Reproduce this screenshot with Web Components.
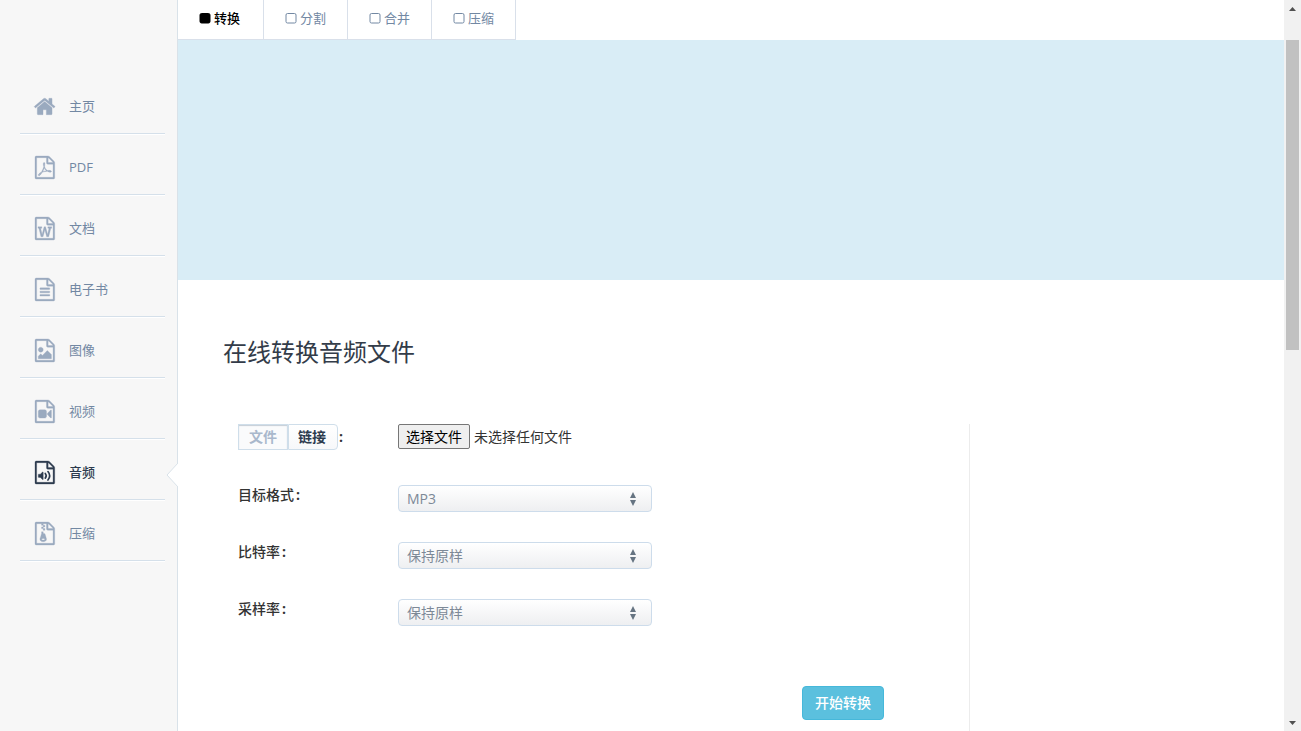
<!DOCTYPE html>
<html lang="zh-CN">
<head>
<meta charset="utf-8">
<title>在线转换音频文件</title>
<style>
  body { margin: 0; background: #fff; color: #333; font: 14px/20px "Open Sans", "Noto Sans CJK SC", sans-serif; }
</style>
</head>
<body>
<app-shell>
  <side-nav slot="nav">
    <nav-item icon="home">主页</nav-item>
    <nav-item icon="pdf">PDF</nav-item>
    <nav-item icon="word">文档</nav-item>
    <nav-item icon="text">电子书</nav-item>
    <nav-item icon="image">图像</nav-item>
    <nav-item icon="video">视频</nav-item>
    <nav-item icon="audio" active>音频</nav-item>
    <nav-item icon="zip">压缩</nav-item>
  </side-nav>
  <tab-bar>
    <tab-link active>转换</tab-link>
    <tab-link>分割</tab-link>
    <tab-link>合并</tab-link>
    <tab-link>压缩</tab-link>
  </tab-bar>
  <ad-banner></ad-banner>
  <convert-form heading="在线转换音频文件"></convert-form>
  <scroll-rail slot="rail"></scroll-rail>
</app-shell>

<script>
const define = (name, html, setup) => {
  const template = document.createElement('template');
  template.innerHTML = html;
  customElements.define(name, class extends HTMLElement {
    constructor() {
      super();
      this.attachShadow({ mode: 'open' }).append(template.content.cloneNode(true));
    }
    connectedCallback() { if (setup) setup(this, this.shadowRoot); }
  });
};

const page = '<path d="M1468 380q28 28 48 76t20 88v1152q0 40-28 68t-68 28h-1344q-40 0-68-28t-28-68v-1600q0-40 28-68t68-28h896q40 0 88 20t76 48zm-444-244v376h376q-10-29-22-41l-313-313q-12-12-41-22zm384 1528v-1024h-416q-40 0-68-28t-28-68v-416h-768v1536h1280z"/>';
const glyphs = {
  home: '<path d="M1408 992v480q0 26-19 45t-45 19h-384v-384h-256v384h-384q-26 0-45-19t-19-45v-480q0-1 .5-3t.5-3l575-474 575 474q1 2 1 6zm223-69l-62 74q-8 9-21 11h-3q-13 0-21-7l-692-577-692 577q-12 8-24 7-13-2-21-11l-62-74q-8-10-7-23.5t11-21.5l719-599q32-26 76-26t76 26l244 204v-195q0-14 9-23t23-9h192q14 0 23 9t9 23v408l219 182q10 8 11 21.5t-7 23.5z"/>',
  pdf: page + '<path d="M894 1071q33 26 84 56 59-7 117-7 147 0 177 49 16 22 2 52 0 1-1 2l-2 2v1q-6 38-71 38-48 0-115-20t-130-53q-221 24-392 83-153 262-242 262-15 0-28-7l-24-12q-1-1-6-5-10-10-6-36 9-40 56-91.500t132-96.500q14-9 23 6 2 2 2 4 52-85 107-197 68-136 104-262-24-82-30.500-159.500t6.500-127.500q11-40 42-40h22q23 0 35 15 18 21 9 68-2 6-4 8 1 3 1 8v30q-2 123-14 192 55 164 146 238zm-576 411q52-24 137-158-51 40-87.500 84t-49.500 74zm398-920q-15 42-2 132 1-7 7-44 0-3 7-43 1-4 4-8-1-1-1-2-1-2-1-3-1-22-13-36 0 1-1 2v2zm-124 661q135-54 284-81-2-1-13-9.500t-16-13.500q-76-67-127-176-27 86-83 197-30 56-45 83zm646-16q-24-24-140-24 76 28 124 28 14 0 18-1 0-1-2-3z"/>',
  word: page + '<path d="M233 768v107h70l164 661h159l128-485q7-20 10-46 2-16 2-24h4l3 24q1 3 3.500 20t5.500 26l128 485h159l164-661h70v-107h-300v107h90l-99 438q-5 20-7 46l-2 21h-4l-3-21q-1-5-4-21t-5-25l-144-545h-114l-144 545q-2 9-4.500 24.500t-3.500 21.500l-4 21h-4l-2-21q-2-26-7-46l-99-438h90v-107h-300z"/>',
  text: page + '<path d="M416 768h704q32 0 32 32v64q0 32-32 32h-704q-32 0-32-32v-64q0-32 32-32zm0 256h704q32 0 32 32v64q0 32-32 32h-704q-32 0-32-32v-64q0-32 32-32zm0 256h704q32 0 32 32v64q0 32-32 32h-704q-32 0-32-32v-64q0-32 32-32z"/>',
  image: page + '<path d="M1280 1216v320h-1024v-192l192-192 128 128 384-384zm-832-192q-80 0-136-56t-56-136 56-136 136-56 136 56 56 136-56 136-136 56z"/>',
  video: page + '<path d="M768 768q52 0 90 38t38 90v384q0 52-38 90t-90 38h-384q-52 0-90-38t-38-90v-384q0-52 38-90t90-38h384zm492 2q20 8 20 30v576q0 22-20 30-8 2-12 2-14 0-23-9l-265-266v-90l265-266q9-9 23-9 4 0 12 2z"/>',
  audio: page + '<path d="M620 850q20 8 20 30v544q0 22-20 30-8 2-12 2-12 0-23-9l-166-167h-131q-32 0-32-32v-192q0-32 32-32h131l166-167q16-15 35-7z"/><path class="wave" d="M800 970q150 182 0 364M1010 820q270 332 0 664"/>',
  zip: page + '<path d="M640 128h-128v128h128zm128 128h-128v128h128zm-128 128h-128v128h128zm128 128h-128v128h128z"/><path fill-rule="evenodd" d="M781 943l107 349q8 27 8 52 0 83-72.500 137.500t-183.500 54.500-183.500-54.500-72.500-137.500q0-25 8-52 21-63 120-396v-128h128v128h79q22 0 39 13t23 34zm-141 465q53 0 90.500-19t37.500-45-37.500-45-90.500-19-90.500 19-37.500 45 37.500 45 90.500 19z"/>'
};

define('app-shell', `
  <style>
    :host { display: grid; grid-template-columns: 178px minmax(0, 1fr) 17px; min-height: 100vh; }
    main { display: flex; flex-direction: column; }
  </style>
  <slot name="nav"></slot><main><slot></slot></main><slot name="rail"></slot>`);

define('side-nav', `
  <style>
    :host { display: block; box-sizing: border-box; padding: 73px 12px 0 20px; background: #f7f7f7; border-right: 1px solid #d9e2e9; }
  </style>
  <nav aria-label="工具"><slot></slot></nav>`);

define('nav-item', `
  <style>
    :host { display: block; position: relative; color: #7288a3; }
    a { display: flex; align-items: center; gap: 13px; height: 54px; padding: 6px 0 0 14px; border-bottom: 1px solid #d5e0ea; box-shadow: 0 1px #fff; color: inherit; text-decoration: none; font-size: 13px; line-height: 20px; }
    .icon { display: flex; justify-content: center; width: 22px; color: #9aaabf; }
    .icon svg { height: 23px; fill: currentColor; stroke: currentColor; stroke-width: 24px; overflow: visible; }
    .icon .wave { fill: none; stroke-width: 130px; stroke-linecap: round; }
    .notch { display: none; position: absolute; right: -13px; top: 24px; }
    :host([active]) { color: #2d3b4e; }
    :host([active]) a { font-weight: 500; }
    :host([active]) .icon { color: inherit; }
    :host([active]) .notch { display: block; }
  </style>
  <a href="#"><span class="icon"></span><span><slot></slot></span></a>
  <svg class="notch" width="12" height="24" viewBox="0 0 12 24" aria-hidden="true"><path d="M12 0L1 12L12 24" fill="#fff" stroke="#d9e2e9"/></svg>`,
  (el, root) => {
    const name = el.getAttribute('icon');
    root.querySelector('.icon').innerHTML = `<svg aria-hidden="true" viewBox="0 0 ${name === 'home' ? 1664 : 1536} 1792">${glyphs[name]}</svg>`;
    if (el.hasAttribute('active')) root.querySelector('a').setAttribute('aria-current', 'page');
  });

define('tab-bar', `
  <style>
    :host { display: block; }
    nav { display: flex; }
  </style>
  <nav aria-label="音频工具"><slot></slot></nav>`);

define('tab-link', `
  <style>
    :host { display: block; color: #7288a3; }
    a { display: flex; align-items: center; gap: 3px; height: 35px; padding: 0 21px 4px; border: solid #d9e0ea; border-width: 0 1px 1px 0; color: inherit; font-size: 13px; text-decoration: none; }
    svg { fill: none; stroke: currentColor; }
    :host([active]) { color: #000; }
    :host([active]) a { font-weight: 500; padding-right: 23px; }
    :host([active]) svg { fill: currentColor; }
  </style>
  <a href="#"><svg width="12" height="12" viewBox="0 0 12 12" aria-hidden="true"><rect x="1" y="1.500" width="10" height="9.500" rx="1.500"/></svg><span><slot></slot></span></a>`);

define('ad-banner', `<style>:host { display: block; height: 240px; background: #d9edf6; }</style>`);

define('toggle-pair', `
  <style>
    :host { display: inline-flex; }
    button { height: 26px; padding: 0 10px; border: 1px solid #cfdeea; background: linear-gradient(#fff, #f7f8fa); color: #2d3b4e; font: bold 14px/20px "Open Sans", "Noto Sans CJK SC", sans-serif; }
    button:first-child { border-radius: 4px 0 0 4px; border-right: 0; }
    button:last-child { padding: 0 11px 0 9px; border-radius: 0 4px 4px 0; }
    button[aria-pressed=true] { color: #a9b8cc; background: #fafbfc; box-shadow: inset 0 1px 1px #c5ced6; }
  </style>
  <button type="button" aria-pressed="true">文件</button><button type="button" aria-pressed="false">链接</button>`,
  (el, root) => {
    const buttons = [...root.querySelectorAll('button')];
    buttons.forEach(b => b.onclick = () => buttons.forEach(o => o.setAttribute('aria-pressed', o === b)));
  });

define('file-picker', `
  <style>
    :host { display: flex; align-items: flex-start; gap: 4px; line-height: 25px; }
    button { height: 25px; padding: 0 7px; border: 1px solid #767676; border-radius: 2px; background: #efefef; color: #000; font: inherit; line-height: 20px; }
  </style>
  <input type="file" aria-label="选择文件" hidden>
  <button type="button">选择文件</button><span>未选择任何文件</span>`,
  (el, root) => {
    const input = root.querySelector('input');
    root.querySelector('button').onclick = () => input.click();
    input.onchange = () => root.querySelector('span').textContent = input.files.length ? input.files[0].name : '未选择任何文件';
  });

define('select-row', `
  <style>
    :host { display: grid; grid-template-columns: 160px minmax(0, 254px); }
    label { display: flex; gap: 2px; font-weight: 500; }
    label span:last-child { font-weight: 700; }
    .box { position: relative; display: grid; }
    select { appearance: none; height: 27px; margin: 0; padding: 0 24px 0 8px; border: 1px solid #cddceb; border-radius: 4px; background: linear-gradient(#fff, #eeeff1); color: #7d8997; font: inherit; }
    svg { position: absolute; right: 15px; top: 7px; fill: #667482; pointer-events: none; }
  </style>
  <label for="choice"><span class="name"></span><span>:</span></label>
  <div class="box"><select id="choice"><option></option></select>
    <svg width="8" height="14" viewBox="0 0 8 14" aria-hidden="true"><path d="M4 0L7 6H1zM1 8H7L4 14z"/></svg></div>`,
  (el, root) => {
    root.querySelector('.name').textContent = el.getAttribute('label');
    root.querySelector('option').textContent = el.getAttribute('value');
  });

define('convert-form', `
  <style>
    :host { display: flex; flex-direction: column; flex: 1; padding: 56px 45px 0; }
    h1 { margin: 0; color: #333c49; font-size: 24px; line-height: 32px; font-weight: 400; }
    .columns { display: grid; grid-template-columns: minmax(0, 1fr) 269px; flex: 1; margin-top: 56px; }
    form { padding: 0 85px 11px 15px; border-right: 1px solid #ececec; }
    .source { display: grid; grid-template-columns: 160px minmax(0, 1fr); margin-bottom: 35px; }
    .kind { display: flex; align-items: center; gap: 1px; font-weight: bold; }
    select-row { margin-bottom: 30px; }
    .actions { display: flex; justify-content: flex-end; padding-top: 30px; }
    .submit { height: 34px; padding: 0 12px; border: 1px solid #46b8da; border-radius: 4px; background: #5bc0de; color: #fff; font: 500 14px/20px "Open Sans", "Noto Sans CJK SC", sans-serif; }
  </style>
  <h1></h1>
  <div class="columns">
    <form onsubmit="return false">
      <div class="source"><div class="kind"><toggle-pair></toggle-pair><span>:</span></div><file-picker></file-picker></div>
      <select-row label="目标格式" value="MP3"></select-row>
      <select-row label="比特率" value="保持原样"></select-row>
      <select-row label="采样率" value="保持原样"></select-row>
      <div class="actions"><button class="submit">开始转换</button></div>
    </form>
  </div>`,
  (el, root) => { root.querySelector('h1').textContent = el.getAttribute('heading'); });

define('scroll-rail', `
  <style>
    :host { display: flex; flex-direction: column; align-items: center; background: #f1f1f1; }
    svg { flex: none; fill: #505050; }
    .track { flex: 1; width: 13px; padding-top: 23px; }
    .thumb { height: 46%; background: #c1c1c1; }
  </style>
  <svg width="17" height="17" viewBox="0 0 17 17" aria-hidden="true"><path d="M5 11L8.500 7L12 11z"/></svg>
  <div class="track"><div class="thumb"></div></div>
  <svg width="17" height="17" viewBox="0 0 17 17" aria-hidden="true"><path d="M5 7H12L8.500 11z"/></svg>`);
</script>
</body>
</html>
